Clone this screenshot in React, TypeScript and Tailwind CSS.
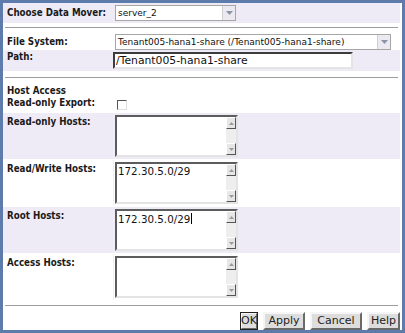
import React from "react";

const font = { fontFamily: '"DejaVu Sans", Verdana, sans-serif' };
const labelCls =
  "font-['DejaVu_Sans_Condensed','DejaVu_Sans',sans-serif] font-stretch-condensed font-bold text-[9.7px] leading-[12px] text-[#1a1a1a]";

function DropArrow() {
  return (
    <div className="flex h-full w-[13px] items-center justify-center border-l border-[#d0d0d0] bg-[#eceaf0]">
      <svg width="7" height="4" viewBox="0 0 7 4">
        <path d="M0 0 H7 L3.5 4 Z" fill="#8a94a8" />
      </svg>
    </div>
  );
}

function Select({ value, width }: { value: string; width: string }) {
  return (
    <div className={`ml-[2px] flex h-[16px] items-stretch border border-[#a6a6a6] bg-white ${width}`}>
      <div className="flex-1 overflow-hidden whitespace-nowrap pl-[2px] text-[9px] leading-[14px] text-[#111]">{value}</div>
      <DropArrow />
    </div>
  );
}

function ScrollBtn({ up }: { up?: boolean }) {
  return (
    <div className="flex h-[12px] w-[10px] items-center justify-center border border-t-white border-l-white border-b-[#555] border-r-[#555] bg-[#e6e6e6]">
      <svg width="5" height="3" viewBox="0 0 5 3">
        <path d={up ? "M0 3 H5 L2.5 0 Z" : "M0 0 H5 L2.5 3 Z"} fill="#9a9a9a" />
      </svg>
    </div>
  );
}

function TextArea({ value, caret }: { value?: string; caret?: boolean }) {
  return (
    <div className="flex h-[42px] w-[123px] border-2 border-t-[#5c5c5c] border-l-[#5c5c5c] border-b-[#e4e4e4] border-r-[#e4e4e4] bg-white">
      <div className="flex-1 pl-[1px] pt-[1px] text-[10.3px] leading-[13px] text-[#111]">
        {value}
        {caret && <span className="ml-[1px] inline-block h-[11px] w-px translate-y-[1px] bg-black" />}
      </div>
      <div className="flex w-[10px] flex-col justify-between bg-[#eeeeee]">
        <ScrollBtn up />
        <ScrollBtn />
      </div>
    </div>
  );
}

function Rule() {
  return <div className="mx-[2px] border-t border-b border-t-[#9c9c9c] border-b-white" />;
}

function HostRow({ label, value, shaded, caret }: { label: string; value?: string; shaded?: boolean; caret?: boolean }) {
  return (
    <div className={`flex h-[46px] ${shaded ? "bg-[#eeebf6]" : "bg-white"}`}>
      <div className={`w-[110px] pl-[4px] pt-[3px] ${labelCls}`}>{label}</div>
      <div className="flex-1 border-l border-[#f0eef6] pl-[1px] pt-[2px]">
        <TextArea value={value} caret={caret} />
      </div>
    </div>
  );
}

function Btn({ children, focus, width }: { children: React.ReactNode; focus?: boolean; width: string }) {
  return (
    <button
      className={`flex h-[18px] items-center justify-center text-[11px] leading-[14px] text-[#222] bg-[#dddddd] border-2 border-t-[#f6f6f6] border-l-[#f6f6f6] border-b-[#6a6a6a] border-r-[#6a6a6a] ${width} ${focus ? "outline outline-1 -outline-offset-1 outline-[#222]" : ""}`}
    >
      {children}
    </button>
  );
}

export default function App() {
  return (
    <div style={font} className="h-[333px] w-[405px] overflow-hidden border-[3px] border-[#5d7cab] bg-white">
      <div className="flex h-[327px] flex-col border-r-2 border-[#fdfdfd]">
        <div className="flex h-[20px] items-center bg-[#eeebf6]">
          <div className={`w-[110px] pl-[4px] ${labelCls}`}>Choose Data Mover:</div>
          <Select value="server_2" width="w-[121px]" />
        </div>
        <div className="mt-[4px]">
          <Rule />
        </div>
        <div className="mt-[5px] flex h-[17px] items-center">
          <div className={`w-[110px] pl-[4px] ${labelCls}`}>File System:</div>
          <Select value="Tenant005-hana1-share (/Tenant005-hana1-share)" width="w-[276px]" />
        </div>
        <div className="flex h-[21px] bg-[#eeebf6]">
          <div className={`w-[110px] pl-[4px] pt-[1px] ${labelCls}`}>Path:</div>
          <div className="pt-[2px]">
            <div className="h-[17px] w-[240px] border-2 border-t-[#3c3c3c] border-l-[#3c3c3c] border-b-[#e4e4e4] border-r-[#e4e4e4] bg-white pl-[1px] text-[10.8px] leading-[13px] text-[#111]">
              /Tenant005-hana1-share
            </div>
          </div>
        </div>
        <div className="mt-[6px]">
          <Rule />
        </div>
        <div className={`mt-[6px] pl-[4px] ${labelCls}`}>Host Access</div>
        <div className="flex h-[15px]">
          <div className={`w-[110px] pl-[4px] ${labelCls}`}>Read-only Export:</div>
          <div className="pl-[4px] pt-[3px]">
            <div className="h-[10px] w-[10px] border border-t-[#555] border-l-[#555] border-b-[#e0e0e0] border-r-[#e0e0e0] bg-white" />
          </div>
        </div>
        <div className="mt-[1px] flex flex-col gap-px">
          <HostRow label="Read-only Hosts:" shaded />
          <HostRow label="Read/Write Hosts:" value="172.30.5.0/29" />
          <HostRow label="Root Hosts:" value="172.30.5.0/29" shaded caret />
          <HostRow label="Access Hosts:" />
        </div>
        <div className="mt-[5px]">
          <Rule />
        </div>
        <div className="mt-[5px] flex justify-end gap-[5px] pr-[0px]">
          <Btn focus width="w-[18px]">OK</Btn>
          <Btn width="w-[42px]">Apply</Btn>
          <Btn width="w-[52px]">Cancel</Btn>
          <Btn width="w-[33px]">Help</Btn>
        </div>
      </div>
    </div>
  );
}
